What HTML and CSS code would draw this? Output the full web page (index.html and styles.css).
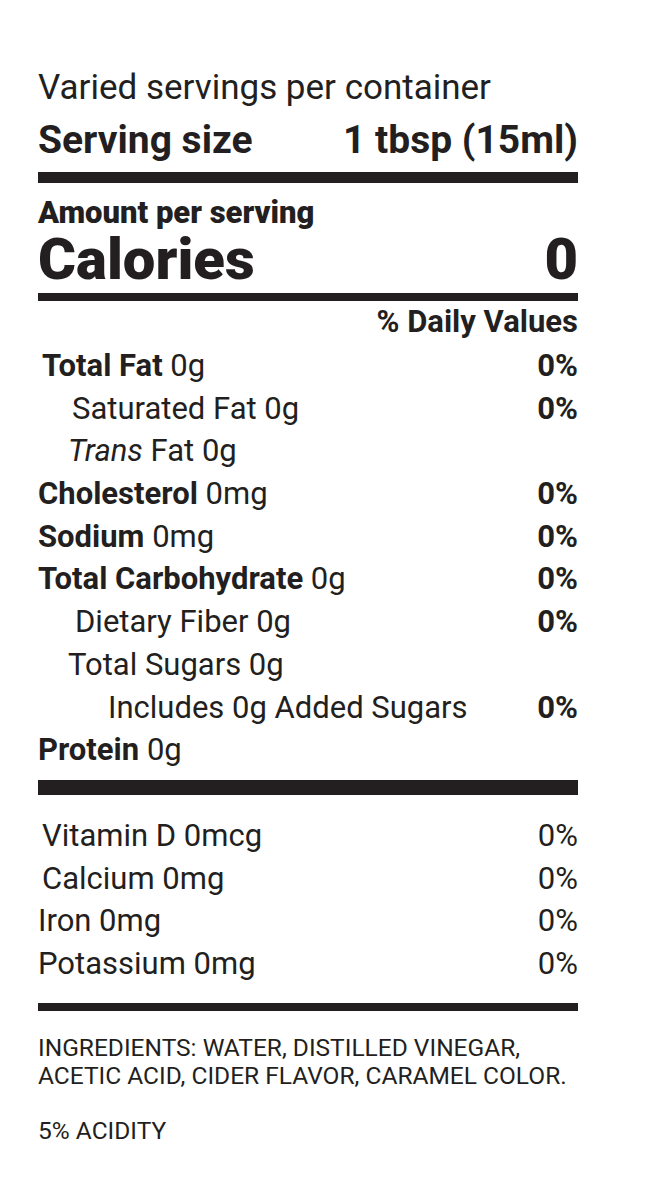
FILE: index.html
```html
<!DOCTYPE html>
<html lang="en">
<head>
<meta charset="utf-8">
<title>Nutrition Facts</title>
<link rel="stylesheet" href="styles.css">
</head>
<body>
<div class="label">
  <div class="servings">Varied servings per container</div>
  <div class="serving-size"><span>Serving size</span><span>1 tbsp (15ml)</span></div>
  <div class="bar bar-1"></div>
  <div class="amount">Amount per serving</div>
  <div class="calories"><span>Calories</span><span>0</span></div>
  <div class="bar bar-2"></div>
  <div class="dv-head">% Daily Values</div>
  <div class="nutrients">
    <div class="row ind-1"><span><b>Total Fat</b> 0g</span><b>0%</b></div>
    <div class="row ind-sat"><span>Saturated Fat 0g</span><b>0%</b></div>
    <div class="row ind-trans"><span><i>Trans</i> Fat 0g</span></div>
    <div class="row"><span><b>Cholesterol</b> 0mg</span><b>0%</b></div>
    <div class="row"><span><b>Sodium</b> 0mg</span><b>0%</b></div>
    <div class="row"><span><b>Total Carbohydrate</b> 0g</span><b>0%</b></div>
    <div class="row ind-fiber"><span>Dietary Fiber 0g</span><b>0%</b></div>
    <div class="row ind-trans"><span>Total Sugars 0g</span></div>
    <div class="row ind-added"><span>Includes 0g Added Sugars</span><b>0%</b></div>
    <div class="row"><span><b>Protein</b> 0g</span></div>
  </div>
  <div class="bar bar-3"></div>
  <div class="vitamins">
    <div class="row ind-1"><span>Vitamin D 0mcg</span><span>0%</span></div>
    <div class="row ind-1"><span>Calcium 0mg</span><span>0%</span></div>
    <div class="row"><span>Iron 0mg</span><span>0%</span></div>
    <div class="row"><span>Potassium 0mg</span><span>0%</span></div>
  </div>
  <div class="bar bar-4"></div>
  <p class="ingredients">INGREDIENTS: WATER, DISTILLED VINEGAR,<br>ACETIC ACID, CIDER FLAVOR, CARAMEL COLOR.</p>
  <p class="acidity">5% ACIDITY</p>
</div>
</body>
</html>
```

FILE: styles.css
```css
html, body {
  margin: 0;
  padding: 0;
  background: #ffffff;
}

body {
  font-family: Roboto, "Liberation Sans", sans-serif;
  color: #231f20;
}

.label {
  width: 540px;
  margin-left: 38px;
  padding-top: 68px;
}

.servings {
  font-size: 35px;
  line-height: 40px;
}

.serving-size {
  display: flex;
  justify-content: space-between;
  font-size: 39px;
  font-weight: 700;
  line-height: 44px;
  margin-top: 10px;
}

.bar {
  background: #231f20;
}

.bar-1 {
  height: 11px;
  margin-top: 10px;
}

.amount {
  font-size: 31px;
  font-weight: 900;
  line-height: 30px;
  margin-top: 15px;
}

.calories {
  display: flex;
  justify-content: space-between;
  font-size: 58px;
  font-weight: 900;
  line-height: 52px;
  margin-top: 5px;
}

.bar-2 {
  height: 8px;
  margin-top: 8px;
}

.dv-head {
  text-align: right;
  font-size: 31px;
  font-weight: 700;
  line-height: 34px;
  margin-top: 4px;
}

.nutrients, .vitamins {
  display: flex;
  flex-direction: column;
}

.nutrients {
  margin-top: 6px;
}

.row {
  display: flex;
  justify-content: space-between;
  font-size: 31px;
  line-height: 42.7px;
  height: 42.7px;
}

.row b {
  font-weight: 700;
}

.ind-1 { padding-left: 4px; }
.ind-sat { padding-left: 34px; }
.ind-trans { padding-left: 30px; }
.ind-fiber { padding-left: 37px; }
.ind-added { padding-left: 70px; }

.bar-3 {
  height: 15px;
  margin-top: 8px;
}

.vitamins {
  margin-top: 20px;
}

.bar-4 {
  height: 8px;
  margin-top: 17px;
}

.ingredients {
  margin: 23px 0 0;
  font-size: 24.5px;
  line-height: 28px;
}

.acidity {
  margin: 27px 0 0;
  font-size: 24.5px;
  line-height: 28px;
}
```
